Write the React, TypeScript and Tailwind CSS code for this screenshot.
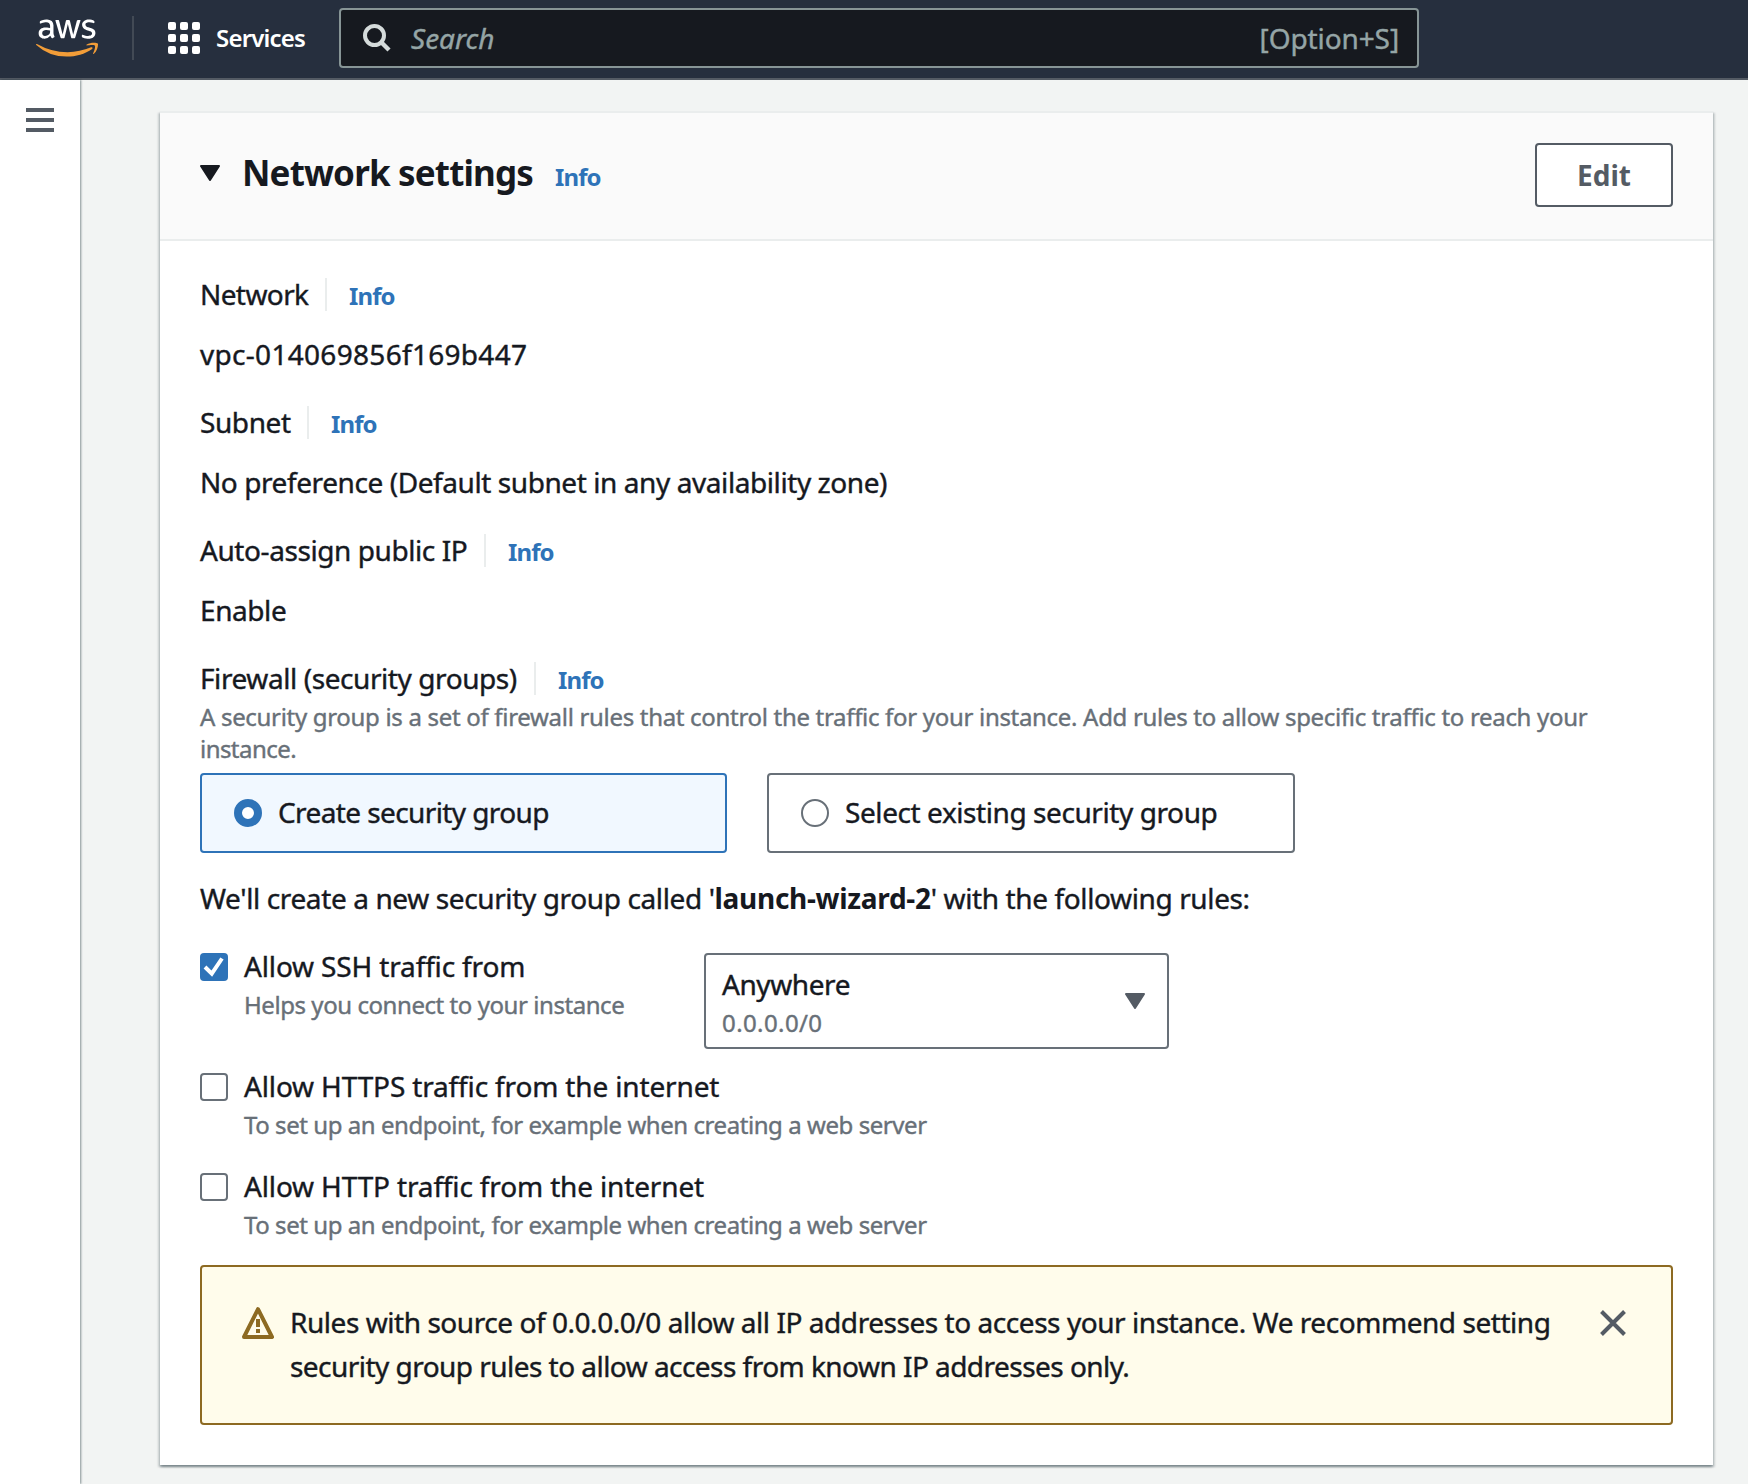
import type { ReactNode } from "react";
import { FaAws } from "react-icons/fa";

function AwsLogo() {
  return (
    <>
      <svg width="0" height="0" className="absolute" aria-hidden="true">
        <defs>
          <linearGradient id="awsFill" x1="0" y1="0" x2="0" y2="1">
            <stop offset="0.6" stopColor="#ffffff" />
            <stop offset="0.6" stopColor="#f29d38" />
          </linearGradient>
        </defs>
      </svg>
      <FaAws className="h-[50px] w-[62px]" fill="url(#awsFill)" />
    </>
  );
}

function Caret({ className }: { className: string }) {
  return (
    <svg viewBox="0 0 20 16" className={`h-4 w-5 shrink-0 ${className}`}>
      <path d="M1 1h18l-9 14z" fill="currentColor" stroke="currentColor" strokeWidth="2" strokeLinejoin="round" />
    </svg>
  );
}

function Info() {
  return (
    <a className="text-[24px] leading-[33px] font-bold tracking-[-0.9px] text-[#2e73b8] [-webkit-text-stroke:0]">Info</a>
  );
}

function Label({ className, children }: { className: string; children: ReactNode }) {
  return (
    <div className="flex h-[33px] items-baseline">
      <span className={`whitespace-nowrap leading-[33px] ${className}`}>{children}</span>
      <span className="h-[33px] w-[2px] shrink-0 self-start bg-[#eaeded]" />
      <span className="ml-[22px] flex">
        <Info />
      </span>
    </div>
  );
}

function Checkbox({ checked }: { checked?: boolean }) {
  return checked ? (
    <span className="mt-[9px] size-7 shrink-0 rounded-[4px] bg-[#2e73b8]">
      <svg viewBox="0 0 28 28" className="size-7">
        <path d="M5 14l6.8 6.7L22 5.5" fill="none" stroke="#fff" strokeWidth="4" />
      </svg>
    </span>
  ) : (
    <span className="mt-[9px] size-7 shrink-0 rounded-[4px] border-2 border-[#687078] bg-white" />
  );
}

function Rule({
  checked,
  label,
  hint,
  className,
}: {
  checked?: boolean;
  label: ReactNode;
  hint: ReactNode;
  className: string;
}) {
  return (
    <div className={`flex shrink-0 items-start ${className}`}>
      <Checkbox checked={checked} />
      <div className="ml-4 whitespace-nowrap">
        <div className="leading-[44px] tracking-[-0.15px]">{label}</div>
        <div className="mt-px text-[24px] leading-8 tracking-[-0.44px] text-[#687078]">{hint}</div>
      </div>
    </div>
  );
}

export default function App() {
  return (
    <div className="flex h-[1484px] w-[1748px] flex-col overflow-hidden bg-[#f2f4f3] font-['Noto_Sans',sans-serif] text-[28px] text-[#16191f] [-webkit-text-stroke:0.4px]">
      <header className="flex h-20 shrink-0 border-b-2 border-[#545b64] bg-[#262f3e] pl-9">
        <div className="mt-[13px] w-24 shrink-0">
          <AwsLogo />
        </div>
        <div className="mt-4 h-11 w-[2px] bg-[#424a55]" />
        <div className="mt-[22px] ml-[34px] grid size-8 grid-cols-3 gap-1">
          {Array.from({ length: 9 }, (_, i) => (
            <span key={i} className="size-2 rounded-[2px] bg-white" />
          ))}
        </div>
        <div className="ml-4 w-[123px] shrink-0 text-[24px] leading-[76px] font-semibold tracking-[-0.8px] whitespace-nowrap text-white [-webkit-text-stroke:0]">
          <span>Services</span>
        </div>
        <div className="mt-2 flex h-[60px] w-[1080px] shrink-0 items-center rounded-[4px] border-2 border-[#879596] bg-[#16191f] px-[22px] text-[#95a5a6]">
          <svg viewBox="0 0 28 28" className="size-7 shrink-0">
            <circle cx="11.5" cy="11.5" r="9.5" fill="none" stroke="#d5dbdb" strokeWidth="4" />
            <path d="M18 18l8 8" stroke="#d5dbdb" strokeWidth="4.5" />
          </svg>
          <span className="ml-5 italic">Search</span>
          <span className="-mr-[4px] ml-auto tracking-[-0.1px]">[Option+S]</span>
        </div>
      </header>

      <div className="flex grow">
        <aside className="w-20 shrink-0 bg-white pt-7 pl-[26px] shadow-[1px_0_2px_rgba(0,28,36,0.45)]">
          <div className="flex w-7 flex-col gap-[6px]">
            <span className="h-1 bg-[#545b64]" />
            <span className="h-1 bg-[#545b64]" />
            <span className="h-1 bg-[#545b64]" />
          </div>
        </aside>

        <main className="pt-[31px] pl-20">
          <section className="h-[1354px] w-[1553px] border-t-2 border-[#eaeded] bg-white shadow-[0_2px_2px_rgba(0,28,36,0.3),2px_2px_2px_rgba(0,28,36,0.15),-2px_2px_2px_rgba(0,28,36,0.15)]">
            <div className="flex h-32 items-start border-b-2 border-[#eaeded] bg-[#fafafa] pr-10 pl-10">
              <Caret className="mt-[52px]" />
              <div className="mt-[34px] ml-[22px] flex items-baseline">
                <h2 className="w-[313px] text-[35px] leading-[52px] font-bold tracking-[-0.85px] whitespace-nowrap [-webkit-text-stroke:0]">
                  <span>Network settings</span>
                </h2>
                <Info />
              </div>
              <button className="mt-[30px] ml-auto h-16 w-[138px] rounded-[4px] border-2 border-[#545b64] bg-white text-[28px] font-bold text-[#545b64] [-webkit-text-stroke:0]">
                Edit
              </button>
            </div>

            <div className="flex flex-col px-10 pt-[37px] tracking-[-0.42px]">
              <Label className="w-[125px] tracking-[-0.6px]">Network</Label>
              <p className="mt-[21px] leading-[44px] tracking-[0.3px]">vpc-014069856f169b447</p>
              <div className="h-[30px]" />
              <Label className="w-[107px]">Subnet</Label>
              <p className="mt-[21px] leading-[44px]">No preference (Default subnet in any availability zone)</p>
              <div className="h-[30px]" />
              <Label className="w-[284px]">Auto-assign public IP</Label>
              <p className="mt-[21px] leading-[44px]">Enable</p>
              <div className="h-[30px]" />
              <Label className="w-[334px]">Firewall (security groups)</Label>
              <p className="mt-[6px] text-[24px] leading-8 tracking-[-0.31px] whitespace-nowrap text-[#687078]">
                A security group is a set of firewall rules that control the traffic for your instance. Add rules to allow specific traffic to reach your
                <br />
                <span className="tracking-[-0.55px]">instance.</span>
              </p>

              <div className="mt-2 flex gap-10">
                <div className="flex h-20 w-[527px] items-center rounded-[4px] border-2 border-[#2e73b8] bg-[#f1f8ff] pl-8">
                  <span className="size-7 rounded-full border-8 border-[#2e73b8] bg-white" />
                  <span className="mb-0.5 ml-4 tracking-[-0.6px] whitespace-nowrap">Create security group</span>
                </div>
                <div className="flex h-20 w-[528px] items-center rounded-[4px] border-2 border-[#687078] bg-white pl-8">
                  <span className="size-7 rounded-full border-2 border-[#687078] bg-white" />
                  <span className="mb-0.5 ml-4 whitespace-nowrap">Select existing security group</span>
                </div>
              </div>

              <p className="mt-[23px] leading-[44px] tracking-[-0.38px] whitespace-nowrap">
                We'll create a new security group called '
                <b className="tracking-[-0.3px] [-webkit-text-stroke:0]">launch-wizard-2</b>' with the following rules:
              </p>

              <div className="mt-6 flex h-[120px]">
                <Rule checked className="w-[504px]" label="Allow SSH traffic from" hint="Helps you connect to your instance" />
                <div className="mt-[9px] flex h-24 w-[465px] items-center justify-between rounded-[4px] border-2 border-[#687078] bg-white pr-[22px] pl-4">
                  <div className="pt-[3px]">
                    <div className="leading-9">Anywhere</div>
                    <div className="mt-[5px] text-[24px] leading-8 tracking-[0.4px] text-[#687078]">0.0.0.0/0</div>
                  </div>
                  <Caret className="text-[#545b64]" />
                </div>
              </div>
              <Rule
                className="h-[100px]"
                label="Allow HTTPS traffic from the internet"
                hint="To set up an endpoint, for example when creating a web server"
              />
              <Rule
                className="h-[101px]"
                label="Allow HTTP traffic from the internet"
                hint="To set up an endpoint, for example when creating a web server"
              />

              <div className="flex h-40 items-start rounded-[4px] border-2 border-[#8d6a22] bg-[#fffceb] pt-[33px] pr-[45px] pl-10">
                <svg viewBox="0 0 32 32" className="mt-[7px] size-8 shrink-0 text-[#8d6a22]">
                  <path d="M16 2.2L30 30H2z" fill="none" stroke="currentColor" strokeWidth="4" strokeLinejoin="round" />
                  <path d="M16 12v8M16 22v4" stroke="currentColor" strokeWidth="4" />
                </svg>
                <p className="ml-4 leading-[44px] tracking-[-0.45px] whitespace-nowrap">
                  Rules with source of 0.0.0.0/0 allow all IP addresses to access your instance. We recommend setting
                  <br />
                  <span className="tracking-[-0.54px]">security group rules to allow access from known IP addresses only.</span>
                </p>
                <svg viewBox="0 0 26 26" className="mt-[10px] ml-auto size-[26px] shrink-0">
                  <path d="M1.5 1.5l23 23M24.5 1.5l-23 23" stroke="#545b64" strokeWidth="4" />
                </svg>
              </div>
            </div>
          </section>
        </main>
      </div>
    </div>
  );
}
